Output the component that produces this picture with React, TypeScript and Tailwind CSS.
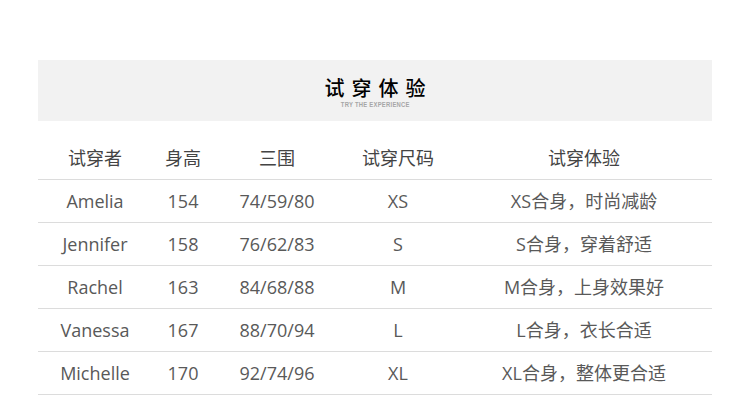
const rows = [
  { name: "Amelia", height: "154", size3: "74/59/80", fit: "XS", note: "XS合身，时尚减龄" },
  { name: "Jennifer", height: "158", size3: "76/62/83", fit: "S", note: "S合身，穿着舒适" },
  { name: "Rachel", height: "163", size3: "84/68/88", fit: "M", note: "M合身，上身效果好" },
  { name: "Vanessa", height: "167", size3: "88/70/94", fit: "L", note: "L合身，衣长合适" },
  { name: "Michelle", height: "170", size3: "92/74/96", fit: "XL", note: "XL合身，整体更合适" },
];

const cols = ["w-[114px]", "w-[62px]", "w-[126px]", "w-[116px]", "w-[256px]"];

const App = () => {
  return (
    <div
      className="w-[750px] h-[405px] bg-white overflow-hidden pt-[60px] px-[38px]"
      style={{ fontFamily: '"Open Sans", "Noto Sans CJK SC", sans-serif' }}
    >
      <div className="w-[674px] h-[61px] bg-[#f2f2f2] flex flex-col items-center pt-[15px]">
        <h2
          className="text-[20px] leading-[26px] font-medium text-black tracking-[7px] pl-[7px]"
          style={{ fontFamily: '"Noto Sans CJK SC", sans-serif' }}
        >
          试穿体验
        </h2>
        <p
          className="text-[6.5px] leading-[8px] font-bold text-[#a6a6a6] tracking-[0.3px] scale-x-90"
          style={{ fontFamily: '"Liberation Sans", sans-serif' }}
        >
          TRY THE EXPERIENCE
        </p>
      </div>

      <div className="w-[674px] mt-[17px]">
        <div className="flex h-[42px] items-center border-b border-[#dcdcdc] text-[18px] text-[#444]">
          {["试穿者", "身高", "三围", "试穿尺码", "试穿体验"].map((h, i) => (
            <div key={h} className={`${cols[i]} text-center`}>
              {h}
            </div>
          ))}
        </div>
        {rows.map((r) => (
          <div
            key={r.name}
            className="flex h-[43px] items-center border-b border-[#dcdcdc] text-[18px] text-[#595959]"
          >
            <div className={`${cols[0]} text-center`}>{r.name}</div>
            <div className={`${cols[1]} text-center`}>{r.height}</div>
            <div className={`${cols[2]} text-center`}>{r.size3}</div>
            <div className={`${cols[3]} text-center`}>{r.fit}</div>
            <div className={`${cols[4]} text-center`}>{r.note}</div>
          </div>
        ))}
      </div>
    </div>
  );
};

export default App;
